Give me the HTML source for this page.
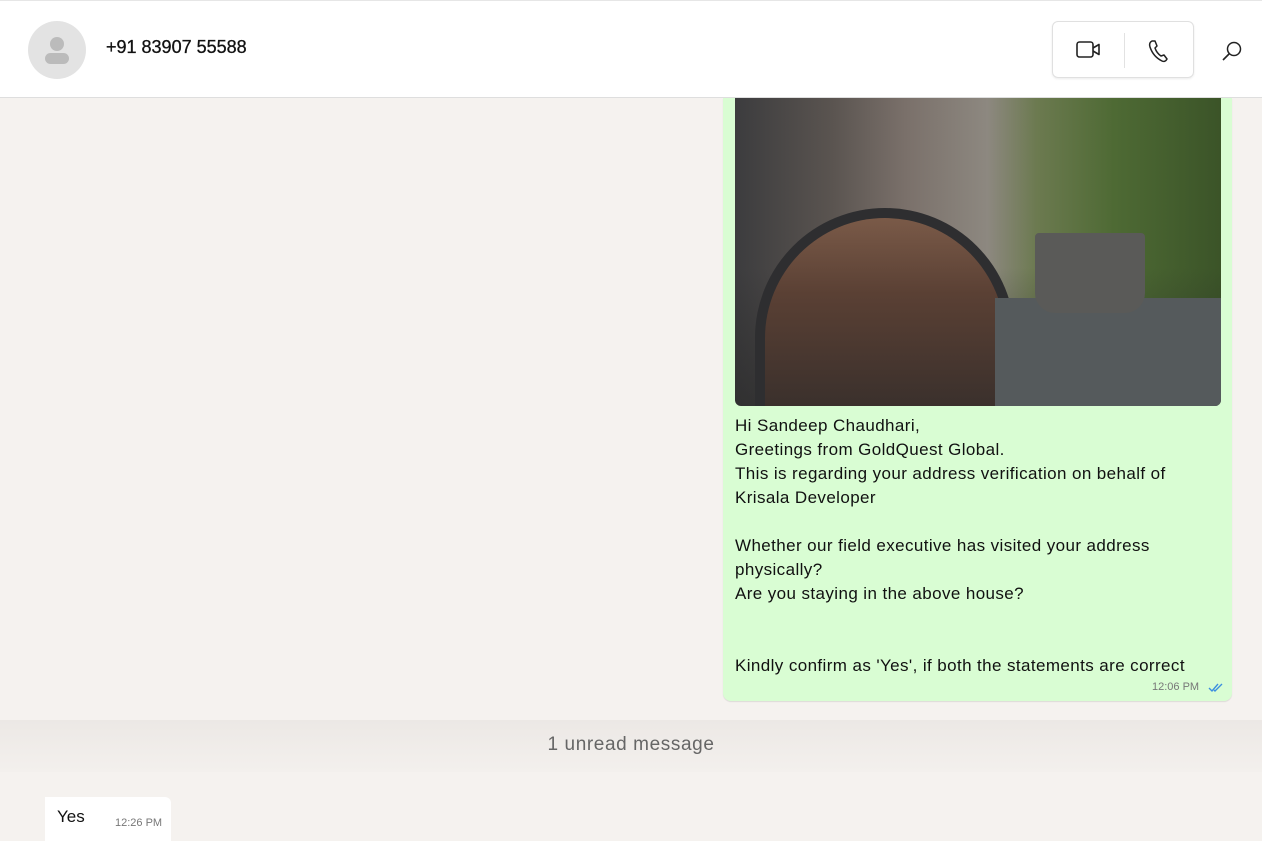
<!DOCTYPE html>
<html><head><meta charset="utf-8"><style>
*{margin:0;padding:0;box-sizing:border-box}
body{width:1262px;height:841px;overflow:hidden;background:#f5f2ef;font-family:"Segoe UI","Liberation Sans",sans-serif;position:relative;color:#111}
.hdr{position:absolute;left:0;top:0;width:1262px;height:98px;background:#fff;border-top:1px solid #e6e6e6;border-bottom:1px solid #dedede}
.av{position:absolute;left:28px;top:20px;width:58px;height:58px;border-radius:50%;background:#e3e3e3}
.name{position:absolute;left:106px;top:36px;font-size:18px;font-weight:500;-webkit-text-stroke:.3px #111}
.btns{position:absolute;left:1052px;top:20px;width:142px;height:57px;border:1px solid #e0e0e0;border-radius:6px;box-shadow:0 1px 2px rgba(0,0,0,.08)}
.bub{position:absolute;left:723px;top:98px;width:509px;height:603px;background:#d9fdd3;border-radius:0 0 8px 8px;box-shadow:0 1px 1px rgba(0,0,0,.1)}
.img{position:absolute;left:735px;top:98px;width:486px;height:308px;border-radius:0 0 6px 6px;overflow:hidden;
background:linear-gradient(180deg,rgba(0,0,0,0) 55%,rgba(40,40,40,.6) 100%),linear-gradient(90deg,#3c3c3e 0%,#5a5450 20%,#7a706a 35%,#8d8880 52%,#6c7a50 62%,#4e6a34 78%,#3b5428 100%)}
.txt{position:absolute;left:735px;top:414px;font-size:17px;line-height:24px;color:#111;letter-spacing:.4px}
.time{position:absolute;font-size:11px;color:#777}
.band{position:absolute;left:0;top:720px;width:1262px;height:52px;background:linear-gradient(180deg,#ece8e5,#f3f0ed)}
.unread{position:absolute;left:0;top:734px;width:1262px;text-align:center;font-size:19px;color:#666;letter-spacing:.6px}
.yes{position:absolute;left:45px;top:797px;width:126px;height:44px;background:#fff;border-radius:0 6px 0 0}
</style></head><body>
<div class="hdr">
<div class="av"><svg width="58" height="58"><circle cx="29" cy="23" r="7" fill="#bbb"/><rect x="17" y="32" width="24" height="11" rx="5.5" fill="#bbb"/></svg></div>
<div class="name">+91 83907 55588</div>
<div class="btns">
<svg style="position:absolute;left:22px;top:17px" width="28" height="22" viewBox="0 0 28 22"><rect x="2" y="3" width="16" height="15" rx="2.5" fill="none" stroke="#222" stroke-width="1.6"/><path d="M18 9 L24 5.5 V15.5 L18 12" fill="none" stroke="#222" stroke-width="1.6" stroke-linejoin="round"/></svg>
<div style="position:absolute;left:71px;top:11px;width:1px;height:35px;background:#e2e2e2"></div>
<svg style="position:absolute;left:94px;top:16px" width="24" height="26" viewBox="0 0 24 26"><path d="M5 3 C3 4 2 6 3 9 C5 15 9 20 15 23 C17 24 19 23 20 21 L17 17 L14 18 C11 16 9 13 8 10 L10 8 L8 3 Z" fill="none" stroke="#222" stroke-width="1.5" stroke-linejoin="round"/></svg>
</div>
<svg style="position:absolute;left:1220px;top:38px" width="24" height="24" viewBox="0 0 24 24"><circle cx="14" cy="10" r="6.5" fill="none" stroke="#222" stroke-width="1.5"/><path d="M9 15 L3 21" stroke="#222" stroke-width="1.6"/></svg>
</div>
<div class="bub"></div>
<div class="img">
<div style="position:absolute;left:20px;top:110px;width:260px;height:200px;border:10px solid #2e2e30;border-bottom:none;border-radius:130px 130px 0 0;background:linear-gradient(180deg,#7a5a48 0%,#5a4034 40%,#3a302c 100%)"></div>
<div style="position:absolute;left:260px;top:200px;width:226px;height:108px;background:#555a5c"></div>
<div style="position:absolute;left:300px;top:135px;width:110px;height:80px;background:#5a5a58;border-radius:4px 4px 20px 20px"></div>
</div>
<div class="txt">Hi Sandeep Chaudhari,<br>Greetings from GoldQuest Global.<br>This is regarding your address verification on behalf of<br>Krisala Developer<br><br>Whether our field executive has visited your address<br>physically?<br>Are you staying in the above house?<br><br><br>Kindly confirm as 'Yes', if both the statements are correct</div>
<div class="time" style="left:1152px;top:681px">12:06 PM</div>
<svg style="position:absolute;left:1208px;top:682px" width="16" height="11" viewBox="0 0 16 11"><path d="M1 6 L4 9 L10 2 M6 8 L7 9 L14 2" fill="none" stroke="#3c8fe0" stroke-width="1.4"/></svg>
<div class="band"></div>
<div class="unread">1 unread message</div>
<div class="yes"><div style="position:absolute;left:12px;top:10px;font-size:17px">Yes</div><div class="time" style="left:70px;top:20px">12:26 PM</div></div>
</body></html>
